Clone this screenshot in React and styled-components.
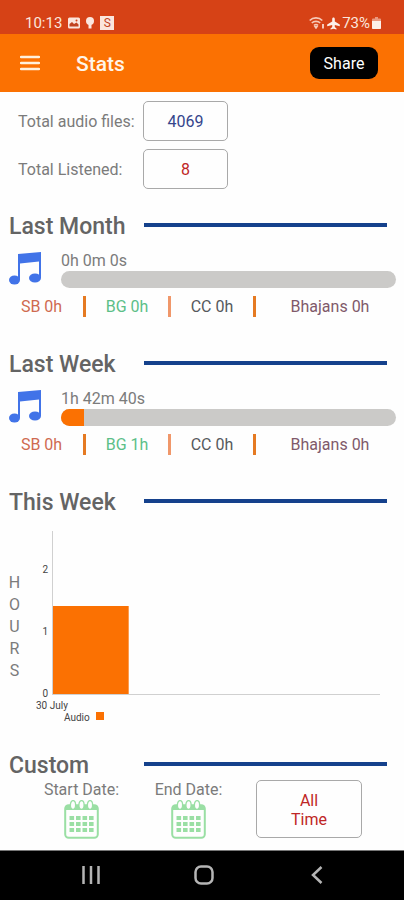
import React from "react";
import styled, { createGlobalStyle } from "styled-components";

const GlobalStyle = createGlobalStyle`
  * {
    box-sizing: border-box;
  }
  body {
    margin: 0;
    background-color: #fefefe;
    color: #7b7b7b;
    font-family: Roboto, "Liberation Sans", sans-serif;
    font-size: 16px;
    line-height: 20px;
  }
  button {
    font-family: inherit;
    cursor: pointer;
  }
`;

const Page = styled.div`
  display: flex;
  flex-direction: column;
  min-height: 100vh;
`;

const StatusBar = styled.div`
  display: flex;
  justify-content: space-between;
  align-items: flex-end;
  height: 34px;
  padding: 0 23px 1px 25px;
  background-color: #d64216;
  color: #fbe6dd;
  font-size: 15px;
`;

const StatusGroup = styled.div`
  display: flex;
  align-items: center;
  gap: ${(props) => props.$gap}px;
`;

const AppBar = styled.header`
  display: flex;
  align-items: center;
  height: 58px;
  padding: 0 26px 0 20px;
  background-color: #fb7102;
`;

const MenuButton = styled.button`
  display: flex;
  padding: 0;
  border: 0;
  background: none;
`;

const AppTitle = styled.h1`
  flex: 1;
  margin: 0 0 0 36px;
  padding-top: 2px;
  color: #fff5e9;
  font-size: 21px;
  font-weight: 500;
  line-height: 28px;
`;

const ShareButton = styled.button`
  width: 68px;
  height: 32px;
  padding: 0;
  border: 0;
  border-radius: 9px;
  background-color: #000;
  color: #fff;
  font-size: 16px;
`;

const Content = styled.main`
  flex: 1;
  padding-top: 9px;
`;

const Totals = styled.dl`
  display: grid;
  grid-template-columns: 117px 85px;
  gap: 8px;
  align-items: center;
  margin: 0 0 22px;
  padding-left: 18px;
`;

const TotalLabel = styled.dt`
  padding-top: 2px;
  white-space: nowrap;
`;

const TotalValue = styled.dd`
  display: flex;
  align-items: center;
  justify-content: center;
  height: 40px;
  margin: 0;
  padding-top: 2px;
  border: 1px solid #a9a9a9;
  border-radius: 5px;
  color: ${(props) => props.$color};
`;

const Section = styled.section`
  padding-bottom: ${(props) => props.$bottom}px;
`;

const Heading = styled.div`
  display: grid;
  grid-template-columns: 135px 1fr;
  align-items: center;
  padding: 0 17px 0 9px;
`;

const HeadingText = styled.h2`
  margin: 0;
  padding-top: 2px;
  color: #646464;
  font-size: 23px;
  font-weight: 500;
  line-height: 28px;
`;

const Rule = styled.div`
  height: 4px;
  margin-bottom: 3px;
  background-color: #15418c;
`;

const Listening = styled.div`
  display: flex;
  align-items: flex-start;
  gap: 20px;
  padding: 10px 8px 0 9px;
`;

const Listened = styled.div`
  flex: 1;
`;

const Track = styled.div`
  height: 17px;
  overflow: hidden;
  border-radius: 9px;
  background-color: #cbcac8;
`;

const Fill = styled.div`
  height: 100%;
  background-color: #fb7102;
`;

const Breakdown = styled.ul`
  display: grid;
  grid-template-columns: 86fr 85fr 85fr 148fr;
  margin: 8px 0 0;
  padding: 0;
  list-style: none;
`;

const BreakdownItem = styled.li`
  height: 21px;
  border-right: ${(props) => (props.$divider ? `3px solid ${props.$divider}` : 0)};
  color: ${(props) => props.$color};
  line-height: 22px;
  text-align: center;
`;

const ChartRow = styled.div`
  display: flex;
  align-items: center;
  padding: 14px 24px 0 9px;
`;

const AxisTitle = styled.div`
  display: flex;
  flex-direction: column;
  align-items: center;
  width: 11px;
  padding-bottom: 4px;
  line-height: 22px;
`;

const Chart = styled.svg`
  flex: 1;
  min-width: 0;
  height: 196px;
  margin-left: 16px;
  fill: #444;
  font-size: 10px;
`;

const CustomRow = styled.div`
  display: grid;
  grid-template-columns: 107fr 107fr 120fr;
  align-items: start;
  padding: 0 42px 10px 28px;
`;

const DateButton = styled.button`
  display: flex;
  flex-direction: column;
  align-items: center;
  padding: 0;
  border: 0;
  background: none;
  color: #7b7b7b;
  font-size: 16px;
  line-height: 20px;
`;

const AllTimeButton = styled.button`
  height: 58px;
  margin-left: 14px;
  padding: 2px 20px 0;
  border: 1px solid #a9a9a9;
  border-radius: 5px;
  background: none;
  color: #bf2626;
  font-size: 16px;
  line-height: 19px;
`;

const NavBar = styled.nav`
  display: grid;
  grid-template-columns: repeat(3, 1fr);
  height: 50px;
  padding: 0 30px 1px 34px;
  border-top: 1px solid #777;
  background-color: #000;
`;

const NavButton = styled.button`
  display: flex;
  align-items: center;
  justify-content: center;
  padding: 0;
  border: 0;
  background: none;
`;

const PictureIcon = () => (
  <svg width="12" height="12" viewBox="0 0 12 12" aria-hidden="true">
    <rect y="0.5" width="12" height="11" rx="1.5" fill="#fbe6dd" />
    <path d="M1.5 9.5V7L4 5l2 2 2.5-1.5 2 2v2z" fill="#c1431f" />
    <circle cx="8.5" cy="3.5" r="1" fill="#d64216" />
  </svg>
);

const BulbIcon = () => (
  <svg width="8" height="12" viewBox="0 0 8 12" fill="#fbe6dd" aria-hidden="true">
    <circle cx="4" cy="4" r="4" />
    <path d="M2.5 7h3v4.5h-3z" />
  </svg>
);

const SquareBadge = styled.span`
  width: 14px;
  height: 14px;
  background-color: #fbe6dd;
  color: #c1431f;
  font-size: 12px;
  line-height: 14px;
  text-align: center;
`;

const WifiIcon = () => (
  <svg width="16" height="12" viewBox="0 0 16 12" fill="none" stroke="#f6c9b8" strokeWidth="1.6" aria-hidden="true">
    <path d="M0.7 3.5C4 0 10 0 13.3 3.5M2.8 6C5 3.8 9 3.8 11.2 6M5 8.3c1.2-1 2.8-1 4 0" />
    <path d="M6 9.5h2l-1 1.5z" fill="#f6c9b8" />
    <path d="M14 7v4.500" strokeWidth="2" />
  </svg>
);

const PlaneIcon = () => (
  <svg width="13" height="13" viewBox="0 0 13 13" fill="#fdf0ea" aria-hidden="true">
    <path d="M6.5 0.5c.8 0 1.3.7 1.3 1.5v2.6l5 3v1.6L7.800 8.100v2l1.700 1.300v1.100l-3-.7-3 .7v-1.100l1.700-1.300v-2L.2 9.200V7.600l5-3V2c0-.8.5-1.500 1.300-1.500z" />
  </svg>
);

const BatteryIcon = () => (
  <svg width="9" height="12" viewBox="0 0 9 12" fill="#fdf0ea" aria-hidden="true">
    <path d="M3 0h3v1.5h2q1 0 1 1V11q0 1-1 1H1q-1 0-1-1V2.5q0-1 1-1h2z" opacity="0.5" />
    <path d="M0 4h9v7q0 1-1 1H1q-1 0-1-1z" />
  </svg>
);

const MenuIcon = () => (
  <svg width="20" height="16" viewBox="0 0 20 16" stroke="#fff0dc" strokeWidth="2.4" strokeLinecap="round" aria-hidden="true">
    <path d="M1 2h18M1 8h18M1 14h18" />
  </svg>
);

const NoteIcon = () => (
  <svg width="32" height="34" viewBox="0 0 32 34" fill="#4173e8" aria-hidden="true">
    <path d="M9 3 32 1v26h-2V10.5L11 12.5V29H9z" />
    <ellipse cx="5.5" cy="29" rx="5.5" ry="4.5" />
    <ellipse cx="26" cy="27" rx="6" ry="4.5" />
  </svg>
);

const CalendarIcon = () => (
  <svg width="35" height="39" viewBox="0 0 35 39" aria-hidden="true">
    <rect x="1.2" y="5.2" width="32.6" height="32.6" rx="3.5" fill="none" stroke="#9adfa4" strokeWidth="2" />
    <path d="M1 10V8q0-3 3-3h27q3 0 3 3v2z" fill="#9adfa4" />
    {[9, 17.5, 26].map((x) => (
      <ellipse key={x} cx={x} cy="5" rx="2.6" ry="4.4" fill="#fefefe" stroke="#9adfa4" strokeWidth="1.3" />
    ))}
    {[16, 22, 28].map((y) =>
      [5.5, 12, 18.5, 25].map((x) => (
        <rect key={`${x}-${y}`} x={x} y={y} width="4.6" height="4" fill="#9adfa4" />
      ))
    )}
  </svg>
);

const SectionHeading = ({ children }) => (
  <Heading>
    <HeadingText>{children}</HeadingText>
    <Rule />
  </Heading>
);

const ListeningSection = ({ title, time, percent, items }) => (
  <Section $bottom={32}>
    <SectionHeading>{title}</SectionHeading>
    <Listening>
      <NoteIcon />
      <Listened>
        <div>{time}</div>
        <Track role="progressbar" aria-label={title} aria-valuenow={percent}>
          <Fill style={{ width: `${percent}%` }} />
        </Track>
      </Listened>
    </Listening>
    <Breakdown>
      {items.map((item) => (
        <BreakdownItem key={item.label} $color={item.color} $divider={item.divider}>
          {item.label}
        </BreakdownItem>
      ))}
    </Breakdown>
  </Section>
);

const breakdown = (sb, bg, cc, bhajans) => [
  { label: `SB ${sb}h`, color: "#cf6a50", divider: "#e57a22" },
  { label: `BG ${bg}h`, color: "#5cbf88", divider: "#f0976a" },
  { label: `CC ${cc}h`, color: "#56595c", divider: "#e57a22" },
  { label: `Bhajans ${bhajans}h`, color: "#80596a" },
];

const WeekChart = () => (
  <Chart role="img" aria-label="Hours listened this week">
    <path d="M16.5 0v163" stroke="#d0d0d0" />
    <line x1="16" y1="163.5" x2="100%" y2="163.5" stroke="#d0d0d0" />
    <rect x="17" y="75" width="22%" height="88" fill="#fb7102" />
    <text x="12" y="42" textAnchor="end">2</text>
    <text x="12" y="104" textAnchor="end">1</text>
    <text x="12" y="166" textAnchor="end">0</text>
    <text x="0" y="178">30 July</text>
    <text x="28" y="190">Audio</text>
    <rect x="60" y="181" width="8" height="8" fill="#fb7102" />
  </Chart>
);

const App = () => {
  return (
    <Page>
      <GlobalStyle />
      <StatusBar>
        <StatusGroup $gap={6}>
          <span>10:13</span>
          <PictureIcon />
          <BulbIcon />
          <SquareBadge>S</SquareBadge>
        </StatusGroup>
        <StatusGroup $gap={2}>
          <WifiIcon />
          <PlaneIcon />
          <span>73%</span>
          <BatteryIcon />
        </StatusGroup>
      </StatusBar>
      <AppBar>
        <MenuButton aria-label="Menu">
          <MenuIcon />
        </MenuButton>
        <AppTitle>Stats</AppTitle>
        <ShareButton>Share</ShareButton>
      </AppBar>
      <Content>
        <Totals>
          <TotalLabel>Total audio files:</TotalLabel>
          <TotalValue $color="#35458c">4069</TotalValue>
          <TotalLabel>Total Listened:</TotalLabel>
          <TotalValue $color="#bf2626">8</TotalValue>
        </Totals>
        <ListeningSection title="Last Month" time="0h 0m 0s" percent={0} items={breakdown(0, 0, 0, 0)} />
        <ListeningSection title="Last Week" time="1h 42m 40s" percent={7} items={breakdown(0, 1, 0, 0)} />
        <Section $bottom={23}>
          <SectionHeading>This Week</SectionHeading>
          <ChartRow>
            <AxisTitle>
              {"HOURS".split("").map((letter) => (
                <span key={letter}>{letter}</span>
              ))}
            </AxisTitle>
            <WeekChart />
          </ChartRow>
        </Section>
        <Section $bottom={0}>
          <SectionHeading>Custom</SectionHeading>
          <CustomRow>
            <DateButton>
              Start Date:
              <CalendarIcon />
            </DateButton>
            <DateButton>
              End Date:
              <CalendarIcon />
            </DateButton>
            <AllTimeButton>
              All
              <br />
              Time
            </AllTimeButton>
          </CustomRow>
        </Section>
      </Content>
      <NavBar>
        <NavButton aria-label="Recent apps">
          <svg width="18" height="18" stroke="#b5b5b5" strokeWidth="2.5">
            <path d="M1.5 0v18M9 0v18M16.5 0v18" />
          </svg>
        </NavButton>
        <NavButton aria-label="Home">
          <svg width="20" height="20" fill="none" stroke="#b5b5b5" strokeWidth="2.5">
            <rect x="1.5" y="1.5" width="17" height="17" rx="5.5" />
          </svg>
        </NavButton>
        <NavButton aria-label="Back">
          <svg width="12" height="18" fill="none" stroke="#b5b5b5" strokeWidth="2.5">
            <path d="M10.5 1 2 9l8.5 8" />
          </svg>
        </NavButton>
      </NavBar>
    </Page>
  );
};

export default App;
